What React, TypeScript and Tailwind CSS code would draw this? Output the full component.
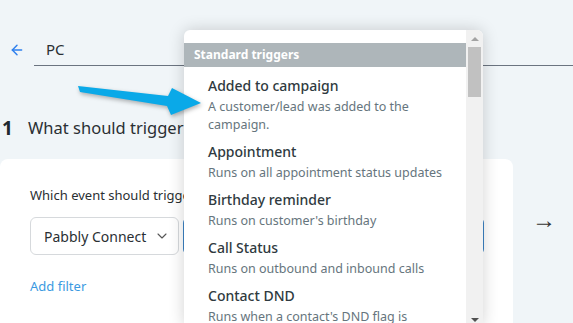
import { ArrowLeft, ChevronDown } from "lucide-react";

const triggers = [
  { title: "Added to campaign", desc: "A customer/lead was added to the campaign." },
  { title: "Appointment", desc: "Runs on all appointment status updates" },
  { title: "Birthday reminder", desc: "Runs on customer's birthday" },
  { title: "Call Status", desc: "Runs on outbound and inbound calls" },
  { title: "Contact DND", desc: "Runs when a contact's DND flag is updated" },
];

function TriggerMenu() {
  return (
    <div className="absolute left-[184px] top-[30px] w-[299px] h-[296px] bg-white rounded-t-[6px] shadow-[0_0_16px_rgba(0,0,0,0.18)] flex overflow-hidden">
      <div className="flex-1 pt-[13px]">
        <div className="h-[24px] bg-[#aeb6ba] text-white text-[12px] font-bold pl-[10px] flex items-center">
          Standard triggers
        </div>
        <ul className="pt-[5px]">
          {triggers.map((t) => (
            <li key={t.title} className="pl-[24px] pr-[16px] pt-[4px] pb-[4px]">
              <p className="text-[14px] leading-[20px] font-medium text-[#2f3a40]">{t.title}</p>
              <p className="mt-[2px] text-[12.5px] leading-[18px] text-[#66757d]">{t.desc}</p>
            </li>
          ))}
        </ul>
      </div>
      {/* scrollbar */}
      <div className="w-[17px] bg-[#f1f1f1] flex flex-col items-center">
        <div className="mt-[7px] w-0 h-0 border-l-[4px] border-r-[4px] border-b-[4px] border-l-transparent border-r-transparent border-b-[#a3a3a3]" />
        <div className="mt-[6px] w-[13px] h-[50px] bg-[#c1c1c1]" />
        <div className="mt-auto mb-[4px] w-0 h-0 border-l-[4px] border-r-[4px] border-t-[4px] border-l-transparent border-r-transparent border-t-[#505050]" />
      </div>
    </div>
  );
}

function Pointer() {
  return (
    <svg
      className="absolute left-[74px] top-[82px] drop-shadow-[1px_2px_2px_rgba(0,0,0,0.3)]"
      width="132"
      height="38"
      viewBox="74 82 132 38"
    >
      <polygon
        points="78,86 168,96 172,88 201,103 171,115 167,106 80,92"
        fill="#0aa9e8"
      />
    </svg>
  );
}

export default function App() {
  return (
    <div className="relative w-[573px] h-[323px] overflow-hidden bg-[#f0f5f8] font-['Noto_Sans',sans-serif] text-[#1f2a30]">
      <div className="flex items-end pt-[33px]">
        <div className="w-[34px] h-[33px] flex items-center pl-[9px]">
          <ArrowLeft size={16} strokeWidth={2.2} className="text-[#2f80ed]" />
        </div>
        <div className="flex-1 h-[33px] border-b border-[#6b7480] pl-[12px] flex items-center text-[15px] text-[#2a2f33]">
          PC
        </div>
      </div>

      <div className="mt-[50px] h-[24px] flex items-center pl-[2px]">
        <span className="text-[19px] font-bold w-[26px]">1</span>
        <span className="text-[16.5px] text-[#2a2f33]">What should trigger this workflow?</span>
      </div>

      <div className="mt-[19px] flex">
        <div className="w-[513px] h-[180px] bg-white rounded-[8px] pl-[30px] pt-[27px]">
          <p className="text-[13px] leading-[18px] text-[#2a2f33]">Which event should trigger this workflow?</p>
          <div className="mt-[13px] flex gap-[4px]">
            <div className="w-[149px] h-[38px] border border-[#d6d9dc] rounded-[6px] flex items-center pl-[13px] gap-[8px] text-[14px] text-[#2a2f33]">
              Pabbly Connect
              <ChevronDown size={16} strokeWidth={1.6} className="text-[#555]" />
            </div>
            <div className="w-[301px] h-[38px] border border-[#3b82c4] rounded-[6px]" />
          </div>
          <p className="mt-[22px] text-[13px] leading-[18px] text-[#3b9ae1]">Add filter</p>
        </div>
        <div className="pl-[19px] pt-[48px] text-[24px] leading-[24px] font-bold text-[#333]">→</div>
      </div>

      <TriggerMenu />
      <Pointer />
    </div>
  );
}
